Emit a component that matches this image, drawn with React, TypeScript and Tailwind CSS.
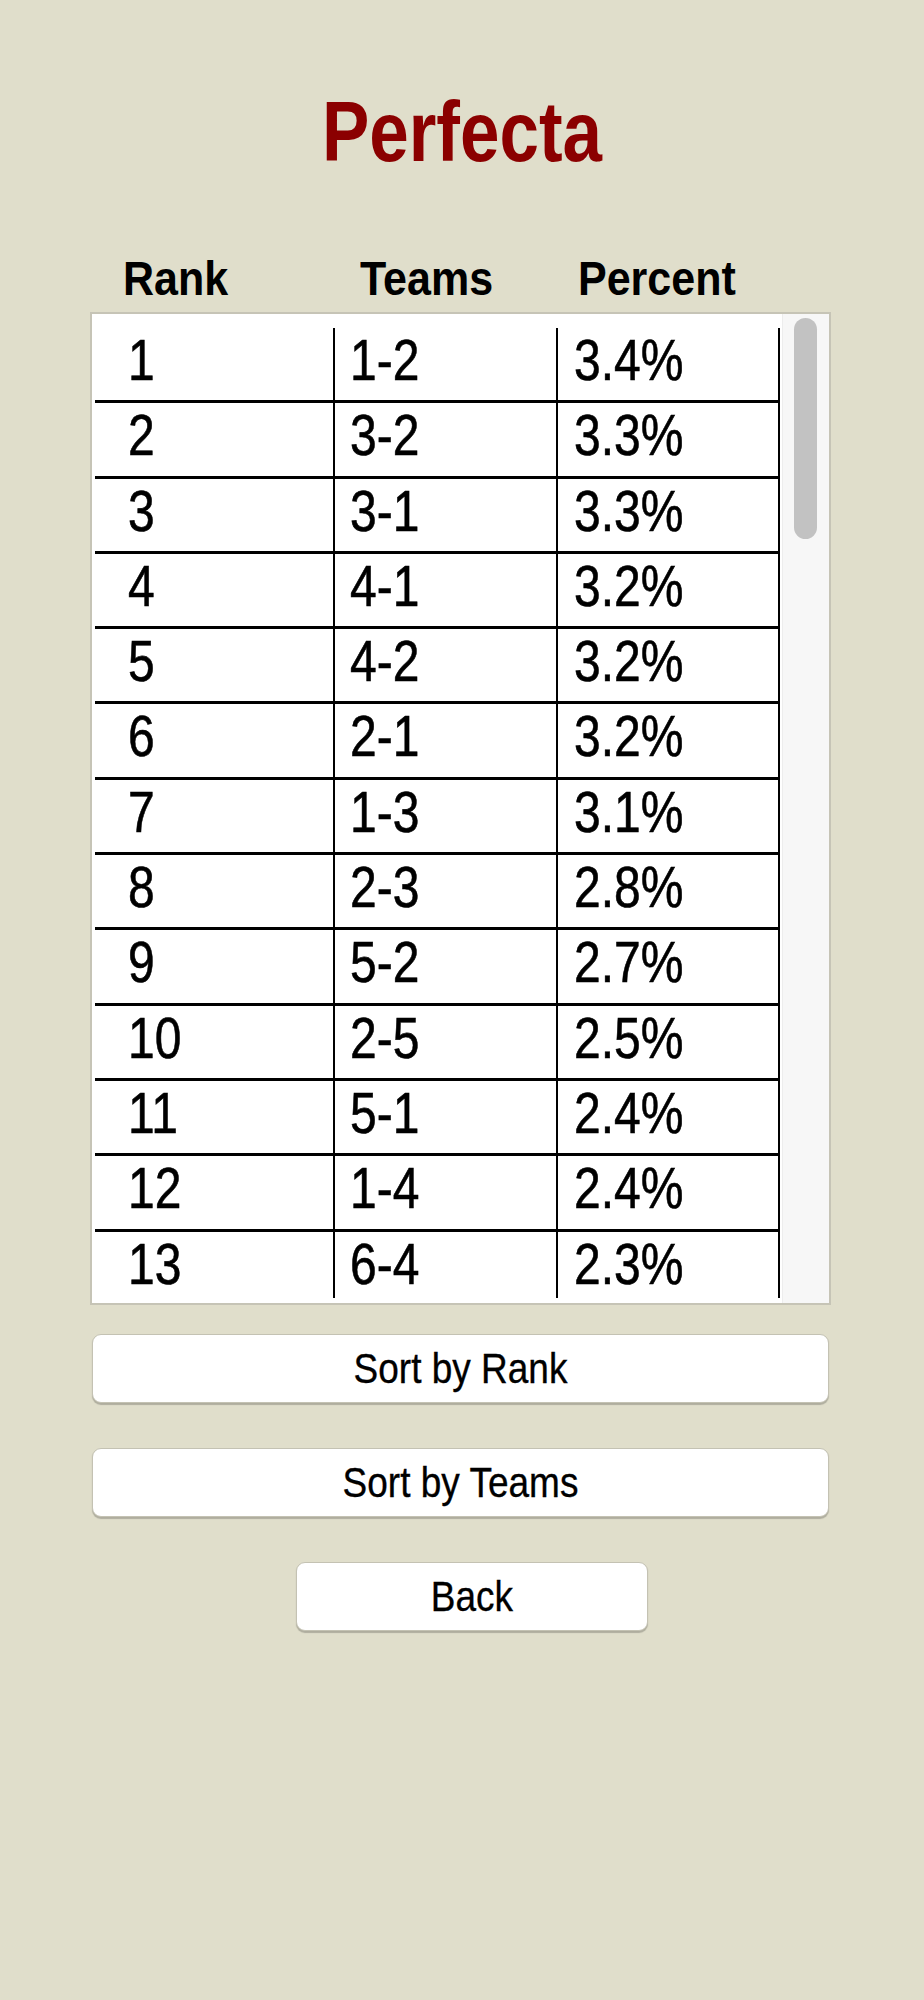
const rows: [number, string, string][] = [
  [1, '1-2', '3.4%'],
  [2, '3-2', '3.3%'],
  [3, '3-1', '3.3%'],
  [4, '4-1', '3.2%'],
  [5, '4-2', '3.2%'],
  [6, '2-1', '3.2%'],
  [7, '1-3', '3.1%'],
  [8, '2-3', '2.8%'],
  [9, '5-2', '2.7%'],
  [10, '2-5', '2.5%'],
  [11, '5-1', '2.4%'],
  [12, '1-4', '2.4%'],
  [13, '6-4', '2.3%'],
];

function Cell({ text, width, pad }: { text: string; width: string; pad: string }) {
  return (
    <div className={`${width} ${pad} h-full border-r-2 border-black pt-[9px]`}>
      <span className="block text-[48px] leading-[48px] scale-y-[1.2] text-black [-webkit-text-stroke:0.5px_black]">
        {text}
      </span>
    </div>
  );
}

function SortButton({ label, className }: { label: string; className: string }) {
  return (
    <button
      className={`${className} h-[69px] flex items-center justify-center bg-white rounded-[9px] border-[1.5px] border-[#c4c2b3] shadow-[0_1.5px_1px_rgba(0,0,0,0.22)]`}
    >
      <span className="block text-[37px] leading-[37px] scale-y-[1.13] text-black [-webkit-text-stroke:0.3px_black]">
        {label}
      </span>
    </button>
  );
}

export default function App() {
  return (
    <div className="min-h-[2000px] w-full bg-[#e0decb] pt-[96px] font-['Liberation_Sans',Arial,sans-serif]">
      <h1 className="text-center text-[71px] leading-[71px] font-bold text-[#8b0000]">
        <span className="inline-block scale-y-[1.2]">Perfecta</span>
      </h1>

      <div className="ml-[90px] w-[741px]">
        {/* column headings */}
        <div className="mt-[90px] h-[43px] flex pl-[33px] text-[43px] leading-[43px] font-bold text-black">
          <span className="block w-[237px] scale-y-[1.14]">Rank</span>
          <span className="block w-[218px] scale-y-[1.14]">Teams</span>
          <span className="block scale-y-[1.14]">Percent</span>
        </div>

        {/* list */}
        <div className="mt-[12px] h-[993px] flex border-2 border-[#c6c4b6]">
          <div className="w-[690px] bg-white pt-[14px]">
            <div className="ml-[3px] h-[970px] overflow-hidden">
              {rows.map(([rank, teams, pct]) => (
                <div key={rank} className="w-[685px] h-[75.3px] flex border-b-[3px] border-black">
                  <Cell text={String(rank)} width="w-[240px]" pad="pl-[33px]" />
                  <Cell text={teams} width="w-[223px]" pad="pl-[15px]" />
                  <Cell text={pct} width="w-[222px]" pad="pl-[16px]" />
                </div>
              ))}
            </div>
          </div>
          <div className="flex-1 bg-[#f7f7f7] border-l border-[#ededed] pt-[4px] pl-[11px]">
            <div className="w-[23px] h-[221px] rounded-full bg-[#c2c2c2]" />
          </div>
        </div>

        <SortButton label="Sort by Rank" className="mt-[29px] ml-[2px] w-[737px]" />
        <SortButton label="Sort by Teams" className="mt-[45px] ml-[2px] w-[737px]" />
        <SortButton label="Back" className="mt-[45px] ml-[206px] w-[352px]" />
      </div>
    </div>
  );
}
